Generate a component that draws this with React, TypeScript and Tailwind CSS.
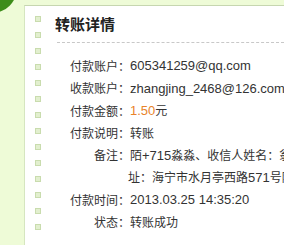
import type { ReactNode } from "react";

const latin = "font-['Liberation_Sans',sans-serif] text-[13px]";

function Row({ label, children }: { label?: string; children: ReactNode }) {
  return (
    <div className="flex h-[22.3px] items-center whitespace-nowrap">
      <div className="w-[75px] shrink-0 text-right">{label ? `${label}：` : ""}</div>
      <div className="whitespace-nowrap">{children}</div>
    </div>
  );
}

export default function App() {
  return (
    <div className="relative h-[245px] w-[284px] overflow-hidden bg-[#eefbd7] font-['Noto_Sans_CJK_SC',sans-serif] text-[12px] text-[#333]">
      {/* green corner blob */}
      <div className="absolute left-[-33px] top-[-37px] h-[50px] w-[50px] rounded-full bg-[#3d8d1a]" />

      <div className="ml-[24px] mt-[5px] flex h-[240px] border-l border-t border-l-[#d6e6c0] border-t-[#c6d6b0] bg-white">
        {/* bullet column */}
        <div className="flex shrink-0 flex-col gap-[10px] pl-[10px] pt-[10px]">
          {Array.from({ length: 14 }).map((_, i) => (
            <div key={i} className="h-[6px] w-[6px] border border-[#c9dcae] bg-[#e2efcf]" />
          ))}
        </div>

        <div className="ml-[14px] min-w-0 flex-1 pt-[8px]">
          <div className="h-[20px] text-[15px] font-bold leading-[20px] text-[#222]">转账详情</div>
          <div className="ml-[2px] mt-[8px] border-t border-dashed border-[#c8c8c8]" />

          <div className="mt-[12px]">
            <Row label="付款账户">
              <span className={latin}>605341259@qq.com</span>
            </Row>
            <Row label="收款账户">
              <span className={latin}>zhangjing_2468@126.com</span>
            </Row>
            <Row label="付款金额">
              <span className={`${latin} text-[#e8832a]`}>1.50</span>元
            </Row>
            <Row label="付款说明">转账</Row>
            <Row label="备注">
              陌<span className={latin}>+715</span>淼淼、收信人姓名：翁先生
            </Row>
            <Row>
              <span className="-ml-[2px]">
                址：海宁市水月亭西路<span className={latin}>571</span>号附近
              </span>
            </Row>
            <Row label="付款时间">
              <span className={latin}>2013.03.25 14:35:20</span>
            </Row>
            <Row label="状态">转账成功</Row>
          </div>
        </div>
      </div>
    </div>
  );
}
